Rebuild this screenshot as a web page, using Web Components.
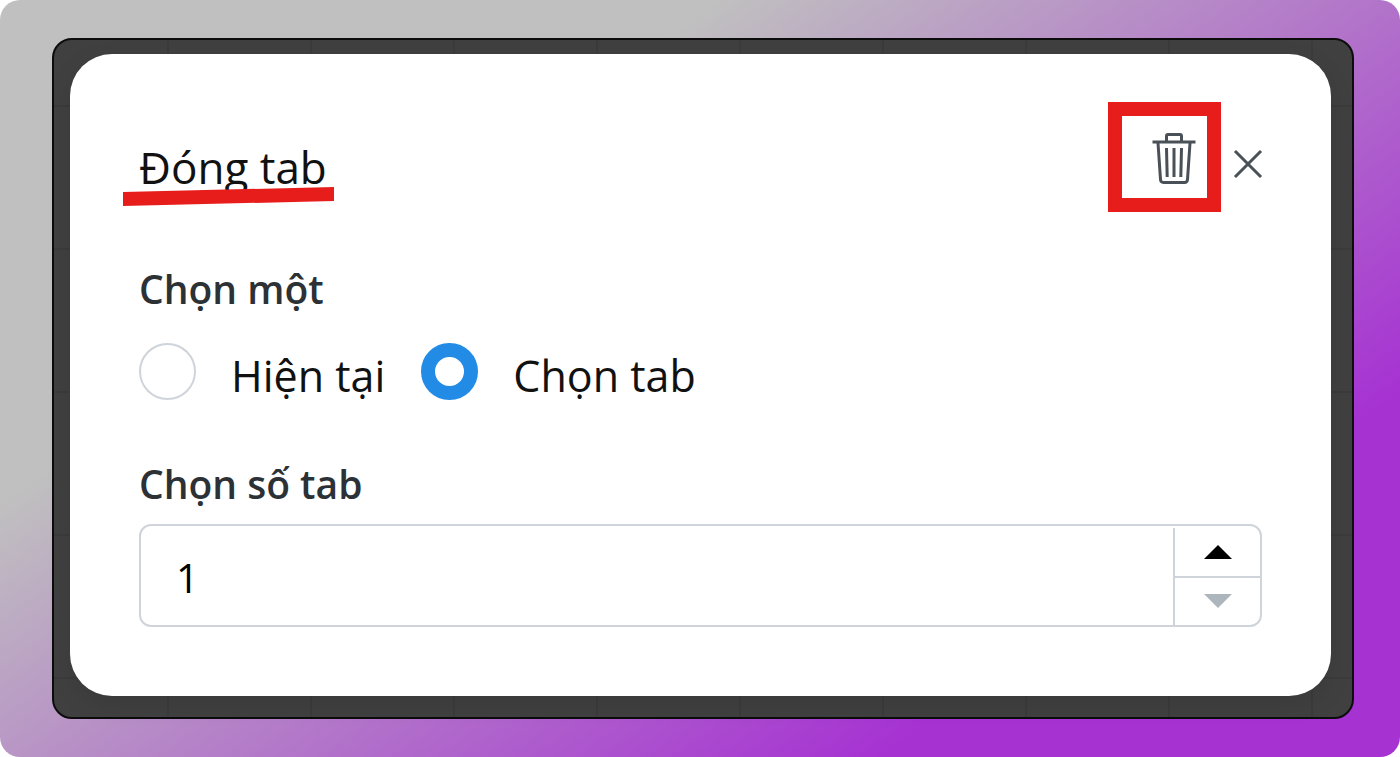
<!DOCTYPE html>
<html lang="vi">
<head>
<meta charset="utf-8">
<meta name="viewport" content="width=device-width, initial-scale=1">
<title>Đóng tab</title>
<style>
  body {
    margin: 0;
    background: #fff;
    font-family: "Open Sans", "Noto Sans", sans-serif;
    color: #111;
    --line: #ced4da;
    --accent: #228be6;
    --mark: #e71d1c;
    --ink: #495057;
    --label: #2c3136;
  }
</style>
</head>
<body>
<gradient-stage>
  <canvas-frame>
    <dialog-card>
      <marked-title slot="title">Đóng tab</marked-title>
      <marked-box slot="actions"><icon-button kind="trash" label="Xóa"></icon-button></marked-box>
      <icon-button slot="actions" kind="close" label="Đóng"></icon-button>
      <radio-group label="Chọn một" options="Hiện tại|Chọn tab" selected="1"></radio-group>
      <number-field label="Chọn số tab" value="1" min="1"></number-field>
    </dialog-card>
  </canvas-frame>
</gradient-stage>

<script>
  class BaseElement extends HTMLElement {
    constructor() {
      super();
      this.attachShadow({ mode: "open" });
    }
    connectedCallback() {
      this.shadowRoot.innerHTML = this.render();
      this.ready();
    }
    render() { return "<slot></slot>"; }
    ready() {}
  }

  customElements.define("gradient-stage", class extends BaseElement {
    render() {
      return `<style>
        :host {
          display: flex;
          box-sizing: border-box;
          min-height: 100vh;
          padding: 38px 46px 38px 52px;
          border-radius: 20px;
          background: linear-gradient(145deg, #c0c0c0 29%, #a632d2 79%);
        }
      </style><slot></slot>`;
    }
  });

  customElements.define("canvas-frame", class extends BaseElement {
    render() {
      return `<style>
        :host {
          display: flex;
          flex: 1;
          box-sizing: border-box;
          min-width: 0;
          padding: 14px 21px 21px 16px;
          border: 2px solid #0c0c0c;
          border-radius: 20px;
          background:
            linear-gradient(90deg, #3b3b3b 2px, transparent 2px) 113px 0 / 143px 143px,
            linear-gradient(#3b3b3b 2px, transparent 2px) 0 65px / 143px 143px,
            #404040;
        }
        ::slotted(*) { flex: 1; min-width: 0; }
      </style><slot></slot>`;
    }
  });

  customElements.define("dialog-card", class extends BaseElement {
    render() {
      return `<style>
        :host {
          display: flex;
          flex-direction: column;
          box-sizing: border-box;
          padding: 48px 69px 69px;
          border-radius: 42px;
          background: #fff;
          box-shadow: 0 8px 24px rgba(0, 0, 0, .1);
        }
        header {
          display: flex;
          align-items: center;
          justify-content: space-between;
          margin-bottom: 48px;
        }
        .actions { display: flex; align-items: center; gap: 11px; }
        .body { display: flex; flex-direction: column; gap: 55px; }
      </style>
      <header>
        <slot name="title"></slot>
        <div class="actions"><slot name="actions"></slot></div>
      </header>
      <div class="body"><slot></slot></div>`;
    }
  });

  customElements.define("marked-title", class extends BaseElement {
    render() {
      return `<style>
        :host { display: block; position: relative; padding-top: 20px; }
        h1 { margin: 0; font-size: 44px; font-weight: 400; line-height: 60px; white-space: nowrap; }
        svg { position: absolute; left: -16px; top: 70px; width: 211px; height: 19px; fill: var(--mark); }
      </style>
      <h1><slot></slot></h1>
      <svg viewBox="0 0 211 19" aria-hidden="true"><path d="M0 5 211 0V14L0 19Z"/></svg>`;
    }
  });

  customElements.define("marked-box", class extends BaseElement {
    render() {
      return `<style>
        :host {
          display: flex;
          align-items: center;
          justify-content: flex-end;
          box-sizing: border-box;
          width: 113px;
          height: 110px;
          padding-right: 11px;
          border: 14px solid var(--mark);
        }
      </style><slot></slot>`;
    }
  });

  const ICONS = {
    trash: `<svg width="44" height="54" viewBox="0 0 44 54" fill="none" stroke="currentColor" stroke-width="3">
      <path d="M14.5 11V6Q14.5 4.500 16 4.500H28Q29.500 4.500 29.500 6V11"/>
      <path d="M0.500 12H43.500"/>
      <path d="M6 13 8.500 49.500Q8.700 52.500 11.500 52.500H32.500Q35.300 52.500 35.500 49.500L38 13"/>
      <path d="M14.500 18 15.200 47M22 18V47M29.500 18 28.800 47"/>
    </svg>`,
    close: `<svg width="30" height="30" viewBox="0 0 30 30" fill="none" stroke="currentColor">
      <path d="M3 2 29 28M29 2 3 28" stroke-width="3"/>
    </svg>`
  };

  customElements.define("icon-button", class extends BaseElement {
    render() {
      const kind = this.getAttribute("kind");
      return `<style>
        :host { display: block; }
        :host([kind="close"]) { padding-top: 14px; }
        button { display: block; margin: 0; padding: 0; border: 0; background: none; color: var(--ink); cursor: pointer; }
        svg { display: block; overflow: visible; }
      </style>
      <button type="button" aria-label="${this.getAttribute("label")}">${ICONS[kind]}</button>`;
    }
  });

  customElements.define("radio-group", class extends BaseElement {
    render() {
      const selected = Number(this.getAttribute("selected"));
      const options = this.getAttribute("options").split("|").map((text, i) => `
        <div class="option">
          <input type="radio" name="choice" id="choice-${i}"${i === selected ? " checked" : ""}>
          <label for="choice-${i}">${text}</label>
        </div>`).join("");
      return `<style>
        :host { display: block; }
        fieldset { margin: 0; padding: 0; border: 0; min-width: 0; }
        legend { padding: 0; margin-bottom: 25px; font-size: 39px; font-weight: 600; line-height: 58px; color: var(--label); }
        .options { display: flex; flex-wrap: wrap; gap: 36px; }
        .option { display: flex; align-items: center; height: 57px; gap: 35px; }
        input {
          appearance: none;
          box-sizing: border-box;
          width: 57px;
          height: 57px;
          margin: 0;
          border: 2px solid var(--line);
          border-radius: 50%;
          background: #fff;
        }
        input:checked { border: 14px solid var(--accent); }
        .option label { padding-top: 8px; font-size: 43px; line-height: 60px; white-space: nowrap; }
      </style>
      <fieldset>
        <legend>${this.getAttribute("label")}</legend>
        <div class="options">${options}</div>
      </fieldset>`;
    }
  });

  customElements.define("number-field", class extends BaseElement {
    render() {
      return `<style>
        :host { display: block; }
        label { display: block; margin-bottom: 11px; font-size: 39px; font-weight: 600; line-height: 58px; color: var(--label); }
        .box {
          display: flex;
          box-sizing: border-box;
          height: 103px;
          border: 2px solid var(--line);
          border-radius: 12px;
          overflow: hidden;
        }
        input {
          appearance: textfield;
          flex: 1;
          min-width: 0;
          margin: 0;
          padding: 4px 35px 0;
          border: 0;
          outline: 0;
          background: none;
          font: 40px "Open Sans", "Noto Sans", sans-serif;
          color: #000;
        }
        input::-webkit-inner-spin-button, input::-webkit-outer-spin-button { appearance: none; margin: 0; }
        .steps { display: flex; flex-direction: column; width: 87px; box-sizing: border-box; margin-top: 2px; border-left: 2px solid var(--line); }
        button {
          flex: 1;
          display: flex;
          align-items: center;
          justify-content: center;
          margin: 0;
          padding: 0;
          border: 0;
          background: none;
          color: #000;
        }
        button + button { border-top: 2px solid var(--line); }
        button:disabled { color: #adb5bd; }
        svg { display: block; fill: currentColor; }
      </style>
      <label for="number">${this.getAttribute("label")}</label>
      <div class="box">
        <input id="number" type="number" min="${this.getAttribute("min")}" value="${this.getAttribute("value")}">
        <div class="steps">
          <button type="button" class="up" aria-label="Tăng"><svg width="28" height="14" viewBox="0 0 28 14"><path d="M14 0 28 14H0Z"/></svg></button>
          <button type="button" class="down" aria-label="Giảm"><svg width="28" height="14" viewBox="0 0 28 14"><path d="M0 0H28L14 14Z"/></svg></button>
        </div>
      </div>`;
    }
    ready() {
      const input = this.shadowRoot.querySelector("input");
      const down = this.shadowRoot.querySelector(".down");
      const sync = () => { down.disabled = Number(input.value) <= Number(input.min); };
      this.shadowRoot.querySelector(".up").addEventListener("click", () => { input.stepUp(); sync(); });
      down.addEventListener("click", () => { input.stepDown(); sync(); });
      input.addEventListener("input", sync);
      sync();
    }
  });
</script>
</body>
</html>
